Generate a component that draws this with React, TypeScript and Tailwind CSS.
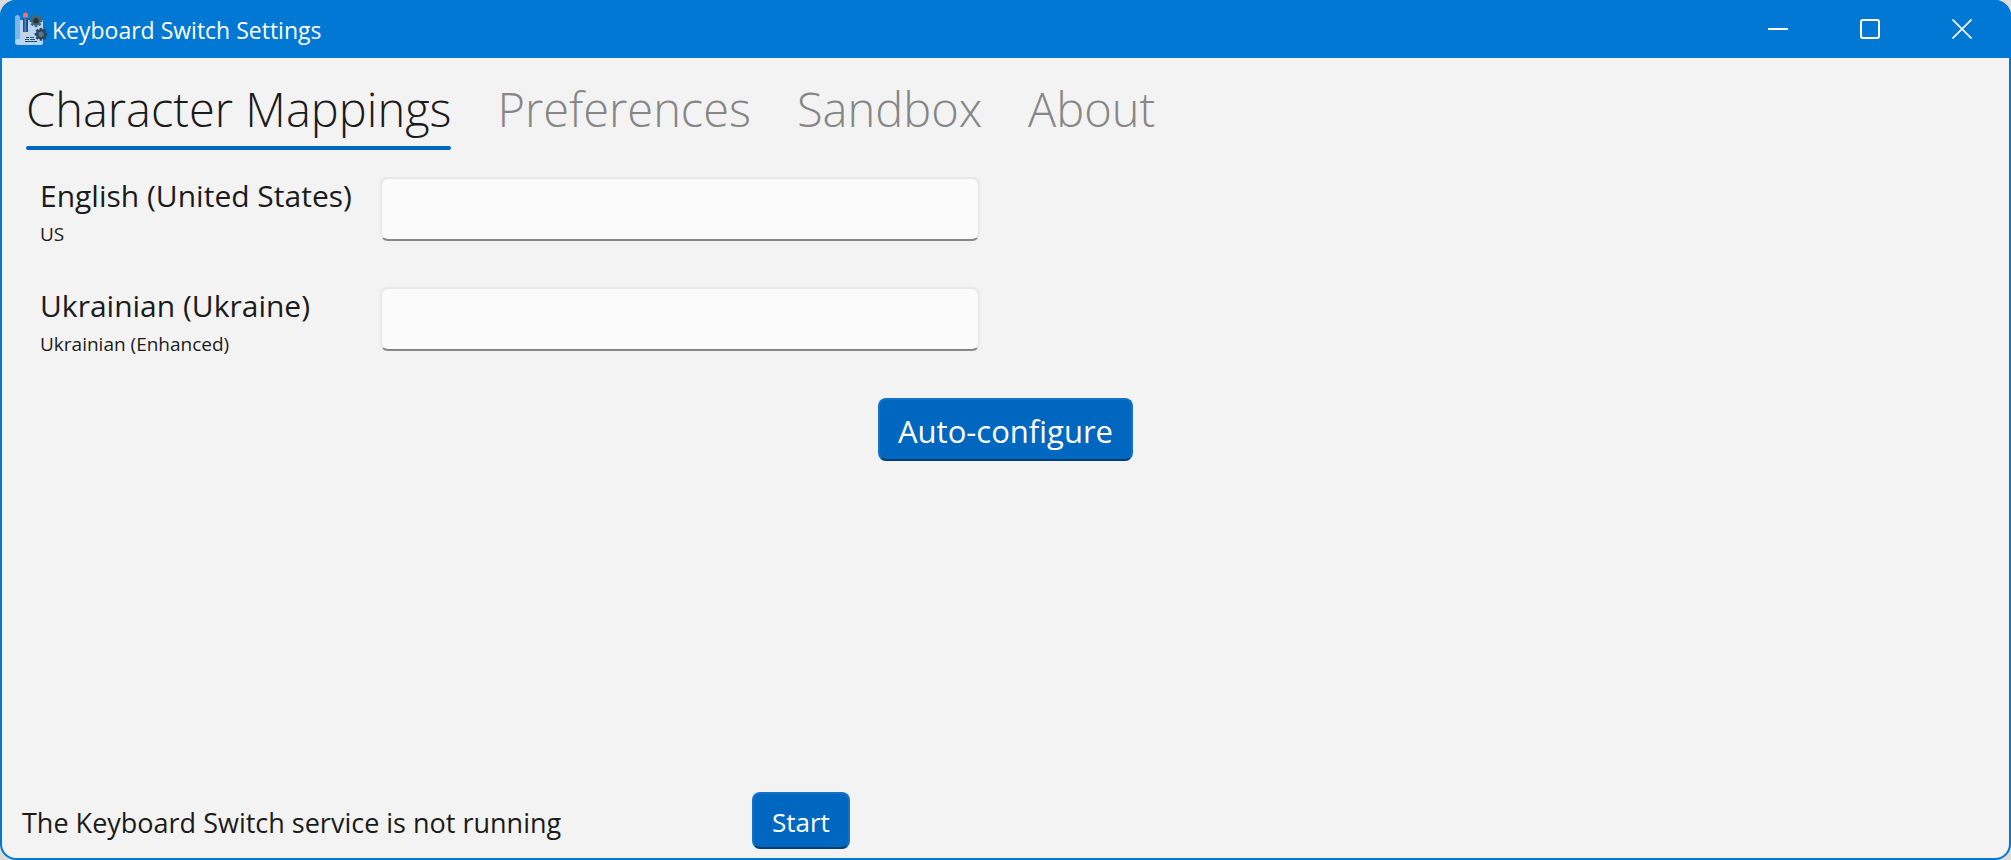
import { useState } from "react";

const TABS = ["Character Mappings", "Preferences", "Sandbox", "About"];

const LAYOUTS = [
  { id: "en-us", language: "English (United States)", layout: "US" },
  { id: "uk-ua", language: "Ukrainian (Ukraine)", layout: "Ukrainian (Enhanced)" },
];

const ACCENT_BUTTON =
  "rounded-lg border-2 border-[#1472c6] border-b-[#003e73] bg-[#0067c0] text-white";

const GEAR_ANGLES = [0, 45, 90, 135];

function Gear({ x, y, body, hub }: { x: number; y: number; body: string; hub: string }) {
  return (
    <g transform={`translate(${x} ${y})`} fill={body}>
      <circle r="5" />
      {GEAR_ANGLES.map((a) => (
        <rect key={a} x="-1.3" y="-6.4" width="2.6" height="12.8" transform={`rotate(${a})`} />
      ))}
      <circle r="2.7" fill={hub} />
    </g>
  );
}

function AppIcon() {
  return (
    <svg width="34" height="34" viewBox="0 0 34 34" aria-hidden="true">
      <path d="M5 8h24v23a2 2 0 0 1-2 2H4a3 3 0 0 1-3-3v-4z" fill="#b5d6f6" />
      <path d="M1 5.500a2.500 2.500 0 0 1 5 0V27H4a3 3 0 0 0-3 3z" fill="#83b4e6" />
      <path d="M9 6h5v14H9z" fill="#24528c" />
      <path d="M10.500 6h1.500v14h-1.500z" fill="#4f86c6" />
      <path d="M9 20h5v2.500l-2 2.500h-1l-2-2.500z" fill="#d9cfca" />
      <path d="M9 5.500V3a2.500 2.500 0 0 1 5 0v2.500z" fill="#f4716b" />
      <path d="M12 25.500h3M16 25.500h4M11 27.500h4M16 27.500h5M11 29.500h12" stroke="#2f4a60" strokeWidth="1" />
      <Gear x={22} y={8.7} body="#4a6670" hub="#243447" />
      <Gear x={27} y={22.3} body="#2b4359" hub="#5b7886" />
    </svg>
  );
}

function TitleBar() {
  return (
    <header className="flex h-[58px] shrink-0 items-center justify-between bg-[#0078d4] pr-[3px] pl-[14px] text-white">
      <div className="flex items-center gap-1">
        <AppIcon />
        <h1 className="pt-0.5 text-[23px] leading-8">Keyboard Switch Settings</h1>
      </div>
      <div className="flex h-full">
        <button type="button" aria-label="Minimize" className="grid w-[92px] place-items-center">
          <svg width="20" height="20" viewBox="0 0 20 20" stroke="currentColor" strokeWidth="2">
            <path d="M0 10h20" />
          </svg>
        </button>
        <button type="button" aria-label="Maximize" className="grid w-[92px] place-items-center">
          <svg width="20" height="20" viewBox="0 0 20 20" fill="none" stroke="currentColor" strokeWidth="2">
            <rect x="1" y="1" width="18" height="18" rx="2" />
          </svg>
        </button>
        <button type="button" aria-label="Close" className="grid w-[92px] place-items-center">
          <svg width="20" height="20" viewBox="0 0 20 20" stroke="currentColor" strokeWidth="1.6">
            <path d="M.5.5l19 19M19.500.5l-19 19" />
          </svg>
        </button>
      </div>
    </header>
  );
}

export default function App() {
  const [active, setActive] = useState(TABS[0]);

  return (
    <div className="bg-[#dcdcdc] font-['Open_Sans','Noto_Sans',sans-serif] text-[#1b1b1b]">
      <div className="overflow-hidden rounded-2xl bg-[#0078d4]">
        <div className="flex min-h-screen flex-col">
          <TitleBar />
          <div className="mx-0.5 mb-0.5 flex grow flex-col rounded-b-[14px] bg-[#f3f3f3]">
            <nav role="tablist" className="flex gap-[46px] px-6 pt-[17px]">
              {TABS.map((tab) => (
                <button
                  key={tab}
                  type="button"
                  role="tab"
                  aria-selected={active === tab}
                  onClick={() => setActive(tab)}
                  className={
                    active === tab
                      ? "text-[47px] leading-[68px] font-light whitespace-nowrap"
                      : "text-[47px] leading-[68px] font-light whitespace-nowrap text-[#868686]"
                  }
                >
                  {tab}
                  <span
                    className={
                      active === tab ? "mt-[3px] block h-1 rounded-full bg-[#0067c0]" : "mt-[3px] block h-1"
                    }
                  />
                </button>
              ))}
            </nav>

            <main className="flex grow flex-col pt-[27px]">
              <div className="grid grid-cols-[340px_600px] gap-y-9 pl-[38px]">
                {LAYOUTS.map(({ id, language, layout }) => (
                  <div key={id} className="col-span-2 grid h-[74px] grid-cols-subgrid items-start">
                    <label htmlFor={id} className="flex flex-col">
                      <span className="text-[30px] leading-[38px]">{language}</span>
                      <span className="text-[19px] leading-[38px]">{layout}</span>
                    </label>
                    <input
                      id={id}
                      type="text"
                      className="h-16 w-full rounded-lg border-2 border-[#e8e8e8] border-b-[#868686] bg-[#fbfbfb] px-4 text-[30px]"
                    />
                  </div>
                ))}
              </div>
              <button
                type="button"
                className={`${ACCENT_BUTTON} mt-[37px] self-center px-[18px] pt-1 text-[31px] leading-[55px]`}
              >
                Auto-configure
              </button>
            </main>

            <footer className="flex items-center pb-[9px] pl-5">
              <p className="w-[730px] pt-1 text-[27px] leading-9">
                The Keyboard Switch service is not running
              </p>
              <button
                type="button"
                className={`${ACCENT_BUTTON} px-[18px] pt-1 text-[26px] leading-[49px]`}
              >
                Start
              </button>
            </footer>
          </div>
        </div>
      </div>
    </div>
  );
}
